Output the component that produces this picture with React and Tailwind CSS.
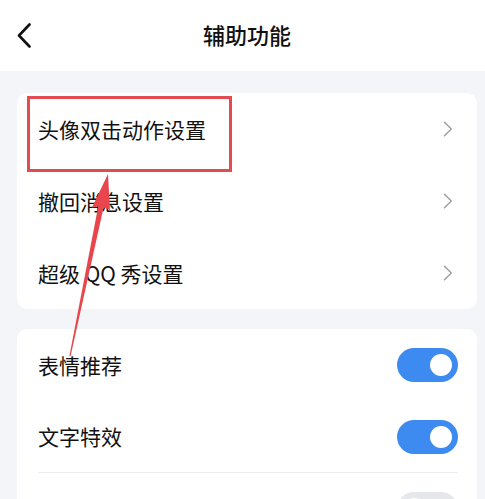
const FONT = { fontFamily: '"Noto Sans CJK SC", "Noto Sans", sans-serif' };

const LINK_ROWS = ["头像双击动作设置", "撤回消息设置", "超级 QQ 秀设置"];

const SWITCH_ROWS = [
  { label: "表情推荐", on: true },
  { label: "文字特效", on: true, divider: true },
  { label: "", on: false },
];

function Toggle({ on }) {
  return (
    <div
      className={`w-[61px] h-[34px] rounded-full flex items-center px-[6px] ${
        on ? "bg-[#3d8bf0] justify-end" : "bg-[#e6e7eb] justify-start"
      }`}
    >
      <div className="w-[22px] h-[22px] rounded-full bg-white" />
    </div>
  );
}

function Chevron() {
  return (
    <svg width="10" height="16" viewBox="0 0 10 16" fill="none">
      <path d="M1.5 1.2 L8.3 8 L1.5 14.8" stroke="#a0a0a0" strokeWidth="1.5" strokeLinecap="round" strokeLinejoin="round" />
    </svg>
  );
}

export default function App() {
  return (
    <div style={FONT} className="relative w-full h-[499px] overflow-hidden bg-[#f4f5f9] text-[#111]">
      {/* header */}
      <div className="relative h-[71px] bg-white flex items-center">
        <svg className="ml-[17px] mb-[1px]" width="15" height="25" viewBox="0 0 15 25" fill="none">
          <path d="M12.5 1.5 L2 12.5 L12.5 23.5" stroke="#111" strokeWidth="2.6" strokeLinecap="round" strokeLinejoin="round" />
        </svg>
        <div className="absolute inset-0 flex items-center justify-center pl-[9px] pb-[2px] text-[22px] font-medium">
          辅助功能
        </div>
      </div>

      <div className="pt-[22px] pl-[17px] pr-[8px]">
        <div className="bg-white rounded-[10px]">
          {LINK_ROWS.map(t => (
            <div key={t} className="h-[72px] flex items-center justify-between pl-[21px] pr-[24px]">
              <span className="text-[21px] leading-none">{t}</span>
              <Chevron />
            </div>
          ))}
        </div>

        <div className="mt-5 bg-white rounded-[10px]">
          {SWITCH_ROWS.map((r, i) => (
            <div key={i} className="pl-[21px] pr-[19px]">
              <div
                className={`h-[72px] flex items-center justify-between ${
                  r.divider ? "border-b border-[#ececee]" : ""
                }`}
              >
                <span className="text-[21px] leading-none">{r.label}</span>
                <Toggle on={r.on} />
              </div>
            </div>
          ))}
        </div>
      </div>

      {/* annotation overlay */}
      <div className="absolute left-[27px] top-[96px] w-[205px] h-[76px] border-[3px] border-[#e24b50] pointer-events-none" />
      <svg className="absolute inset-0 pointer-events-none" width="485" height="499" viewBox="0 0 485 499">
        <polygon
          points="108,174 110,210 103.6,207.6 70.6,356 69.4,356 98.2,206.4 92,207.5"
          fill="#e8464c"
        />
      </svg>
    </div>
  );
}
